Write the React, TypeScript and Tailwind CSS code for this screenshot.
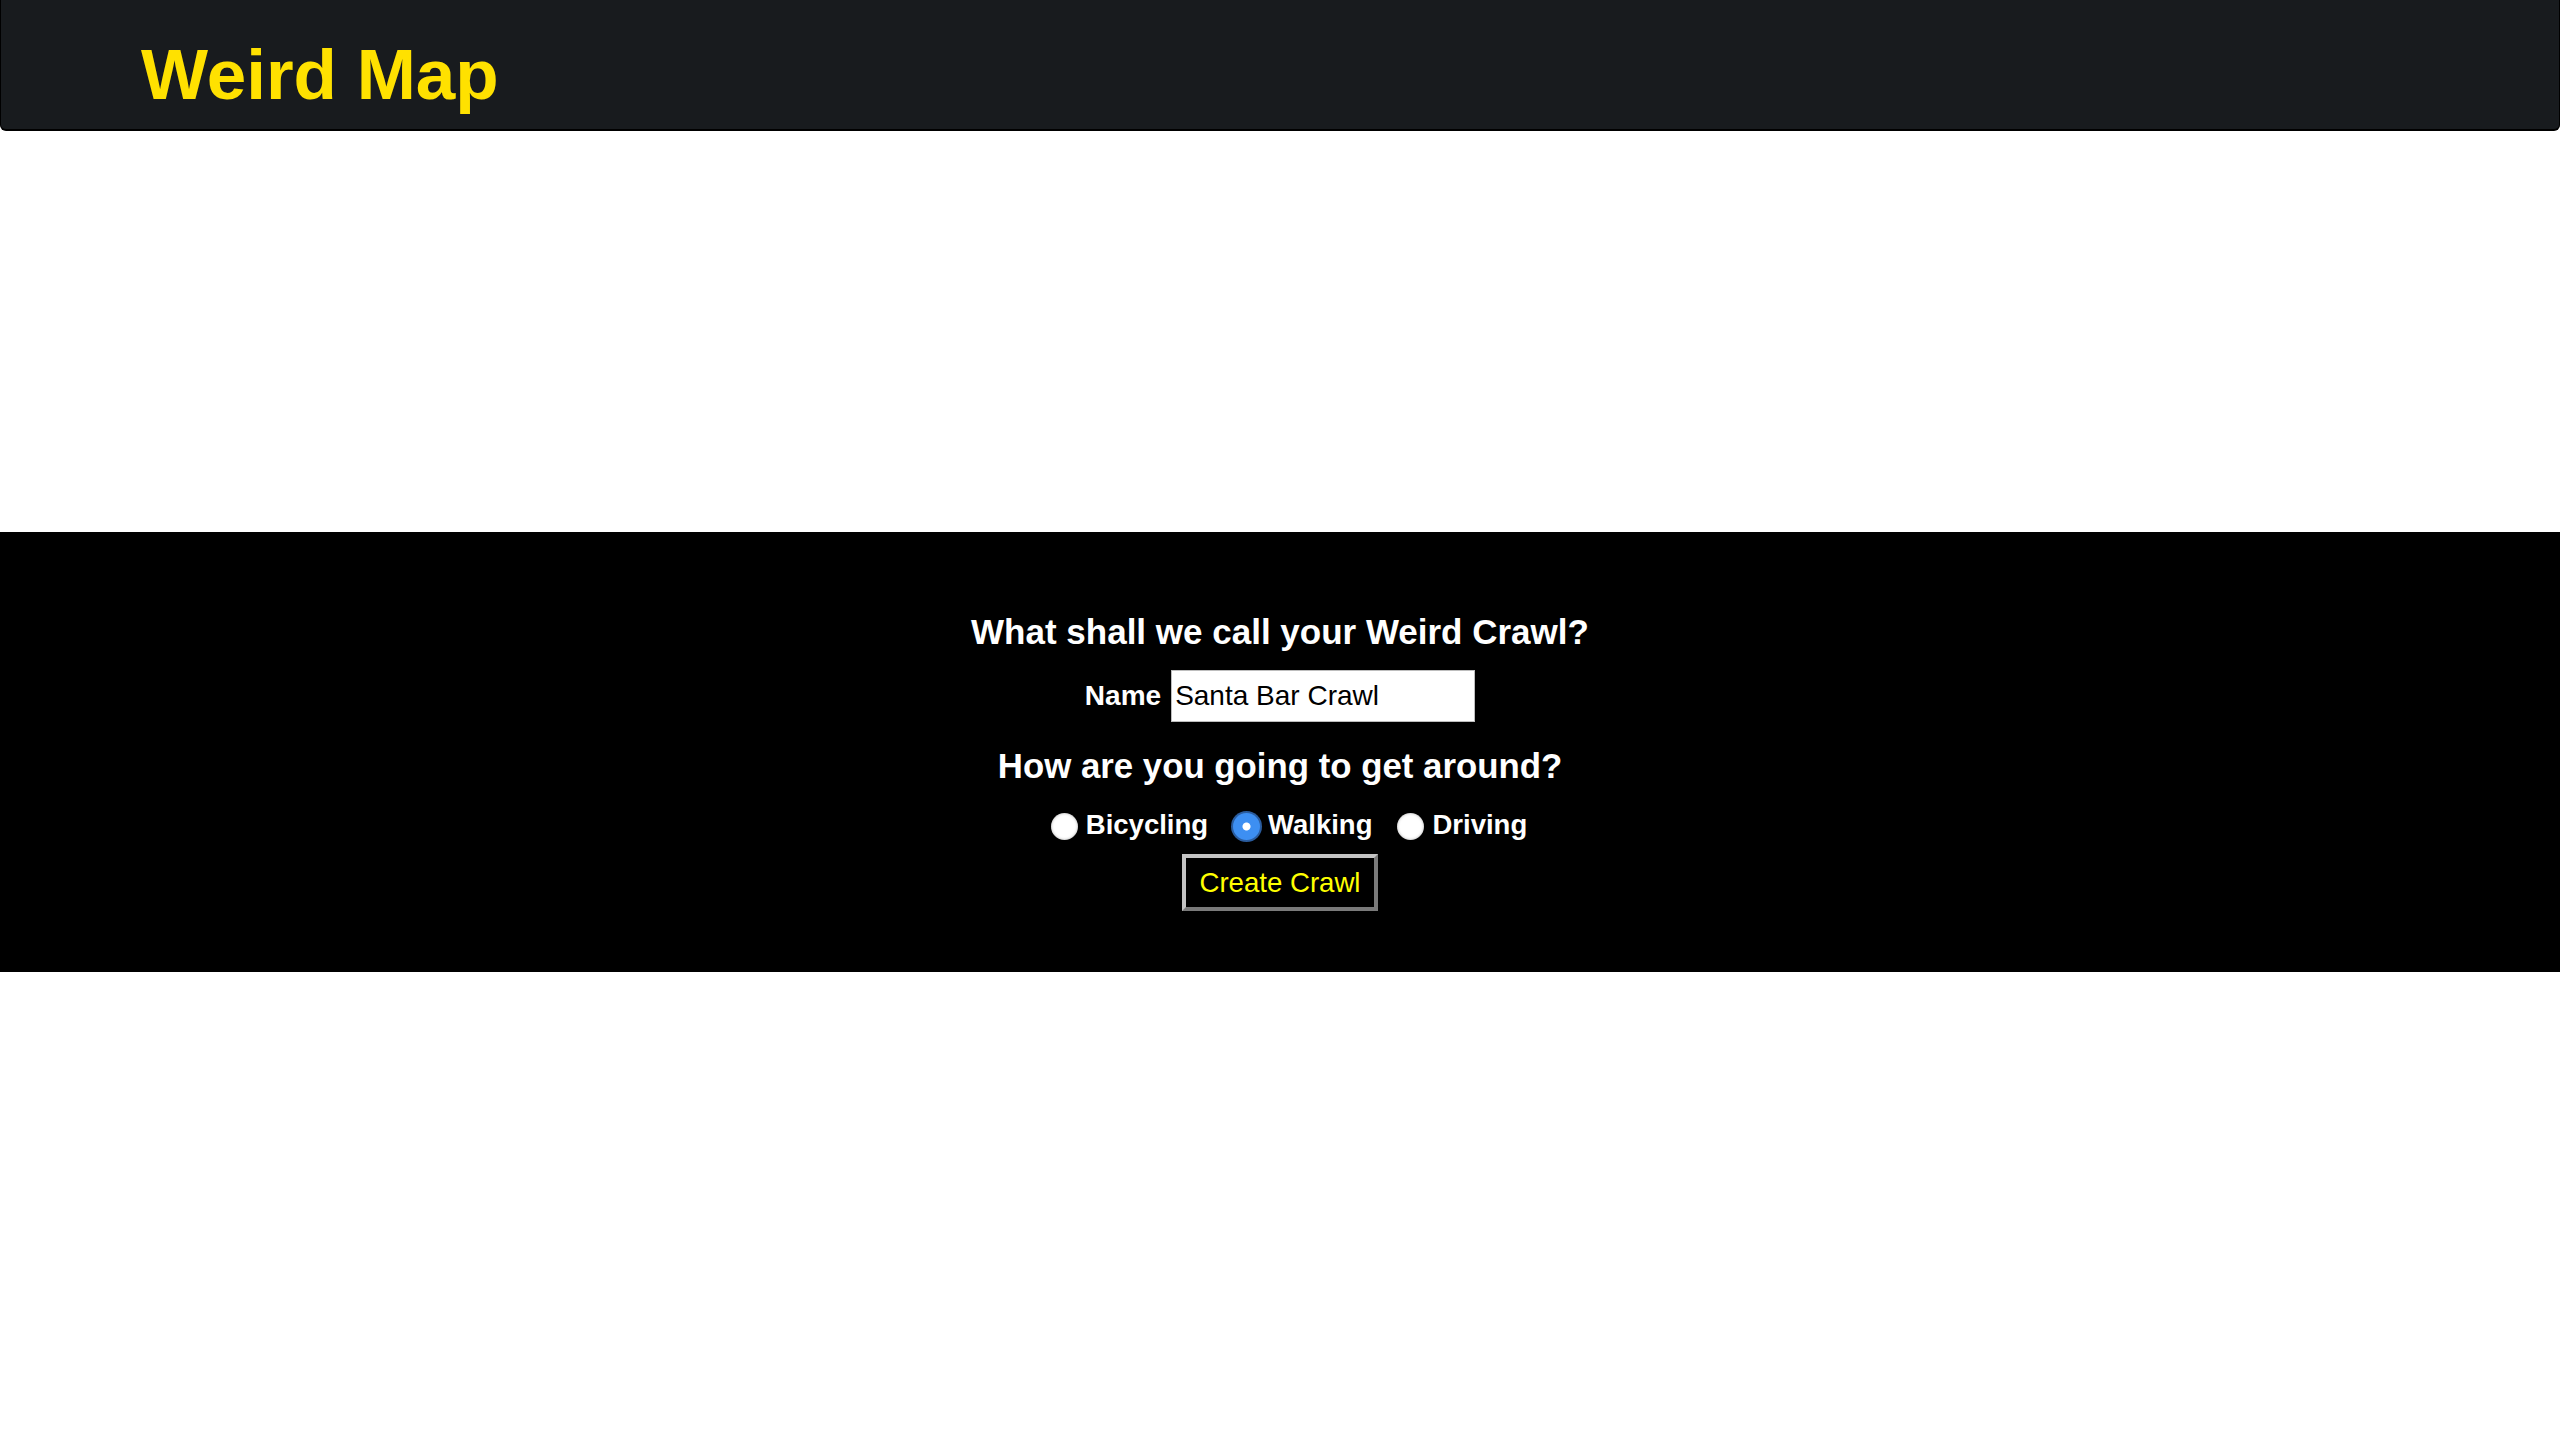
import { useState } from 'react';

const modes = ['Bicycling', 'Walking', 'Driving'];

export default function App() {
  const [mode, setMode] = useState('Walking');
  const [name, setName] = useState('Santa Bar Crawl');

  return (
    <div className="min-h-screen bg-white font-['Liberation_Sans',Arial,sans-serif]">
      <header className="h-[131px] rounded-b-[6px] border-x border-b-2 border-black bg-[#181b1e] pl-[140px] pt-[33px]">
        <h1 className="text-[71px] font-bold leading-[83px] text-[#ffe100]">Weird Map</h1>
      </header>

      <section className="mt-[401px] flex h-[440px] flex-col items-center bg-black pt-[80px] text-white">
        <h2 className="text-[35px] font-bold leading-[40px]">What shall we call your Weird Crawl?</h2>

        <div className="mt-[18px] flex items-center gap-[10px]">
          <label htmlFor="crawl-name" className="text-[28px] font-bold leading-[32px]">
            Name
          </label>
          <input
            id="crawl-name"
            value={name}
            onChange={(e) => setName(e.target.value)}
            className="h-[52px] w-[304px] border border-[#bdbdbd] bg-white px-[3px] text-[28px] text-black outline-none"
          />
        </div>

        <h2 className="mt-[24px] text-[34.8px] font-bold leading-[40px]">How are you going to get around?</h2>

        <div className="mt-[23px] flex items-start gap-[25px] pl-[18px]">
          {modes.map((m) => (
            <label key={m} className="flex cursor-pointer items-start gap-[8px]">
              <input
                type="radio"
                name="mode"
                checked={mode === m}
                onChange={() => setMode(m)}
                className="mt-[4px] h-[27px] w-[27px] appearance-none rounded-full bg-white shadow-[inset_0_0_3px_rgba(0,0,0,0.35)] checked:bg-[radial-gradient(circle,#ffffff_0,#ffffff_3.5px,#3d8ff2_4.5px)] checked:shadow-[0_0_0_2px_#2a5c9e]"
              />
              <span className="text-[27.5px] font-bold leading-[31px]">{m}</span>
            </label>
          ))}
        </div>

        <button className="mt-[14px] h-[57px] w-[196px] border-4 border-b-[#7a7a7a] border-l-[#c4c4c4] border-r-[#7a7a7a] border-t-[#c4c4c4] bg-black text-[27.6px] leading-[32px] text-[#ffff00]">
          Create Crawl
        </button>
      </section>
    </div>
  );
}
